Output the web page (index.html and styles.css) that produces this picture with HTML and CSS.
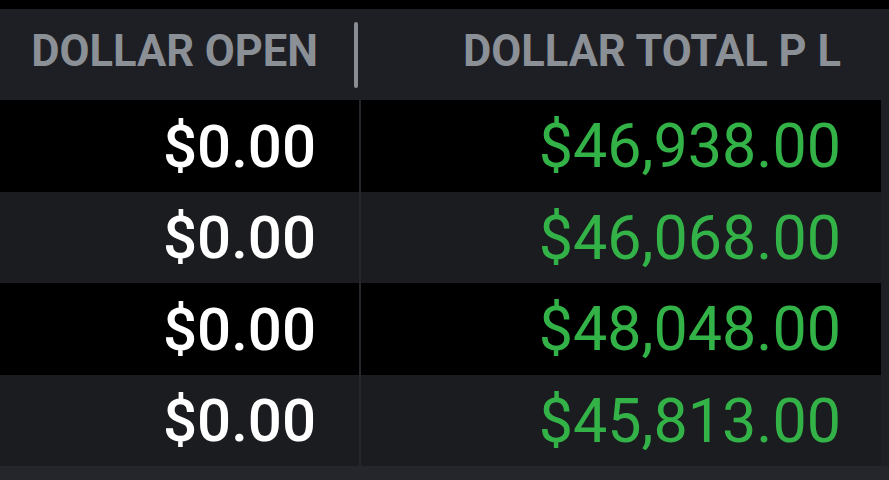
FILE: index.html
```html
<!DOCTYPE html>
<html>
<head>
<meta charset="utf-8">
<link rel="stylesheet" href="styles.css">
</head>
<body>
<div class="grid">
  <div class="head">
    <div class="hcell c1"><span class="htext">DOLLAR OPEN</span><span class="handle"></span></div>
    <div class="hcell c2"><span class="htext">DOLLAR TOTAL P L</span></div>
  </div>
  <div class="row odd">
    <div class="cell c1">$0.00</div><div class="cell c2 pos">$46,938.00</div>
  </div>
  <div class="row even">
    <div class="cell c1">$0.00</div><div class="cell c2 pos">$46,068.00</div>
  </div>
  <div class="row odd">
    <div class="cell c1">$0.00</div><div class="cell c2 pos">$48,048.00</div>
  </div>
  <div class="row even">
    <div class="cell c1">$0.00</div><div class="cell c2 pos">$45,813.00</div>
  </div>
  <div class="foot"></div>
</div>
</body>
</html>
```

FILE: styles.css
```css
html, body {
  margin: 0;
  padding: 0;
  background: #000;
  width: 889px;
  height: 480px;
  overflow: hidden;
  font-family: Roboto, "Liberation Sans", sans-serif;
}
.grid {
  margin-top: 9px;
  background: #1e1f24;
  display: flex;
  flex-direction: column;
  height: 471px;
}
.head {
  display: flex;
  height: 91px;
  padding-right: 8px;
}
.hcell {
  display: flex;
  align-items: center;
  justify-content: flex-end;
  color: #8b9097;
  font-weight: 700;
  font-size: 43.5px;
  padding-bottom: 6px;
  box-sizing: border-box;
}
.head .c1 {
  width: 361px;
  padding-right: 3px;
}
.head .c2 {
  flex: 1;
  padding-right: 40px;
}
.handle {
  width: 4px;
  height: 66px;
  border-radius: 2px;
  background: #8a8d93;
  margin-left: 36px;
  margin-top: 6px;
}
.row {
  display: flex;
  height: 92px;
  padding-right: 8px;
}
.row.even {
  height: 91px;
}
.row.odd .cell { background: #000; }
.row.even .cell { background: #1b1c20; }
.cell {
  display: flex;
  align-items: center;
  justify-content: flex-end;
  font-size: 60px;
  font-weight: 500;
  color: #fff;
  box-sizing: border-box;
}
.row .c1 {
  width: 316px;
  padding-right: 43px;
  border-right: 2px solid #25262b;
  box-sizing: content-box;
}
.row .c2 {
  flex: 1;
  padding-right: 40px;
}
.pos {
  color: #33b347;
  font-weight: 400;
  font-size: 61px;
}
.foot {
  flex: 1;
  background: #25262b;
}
```
